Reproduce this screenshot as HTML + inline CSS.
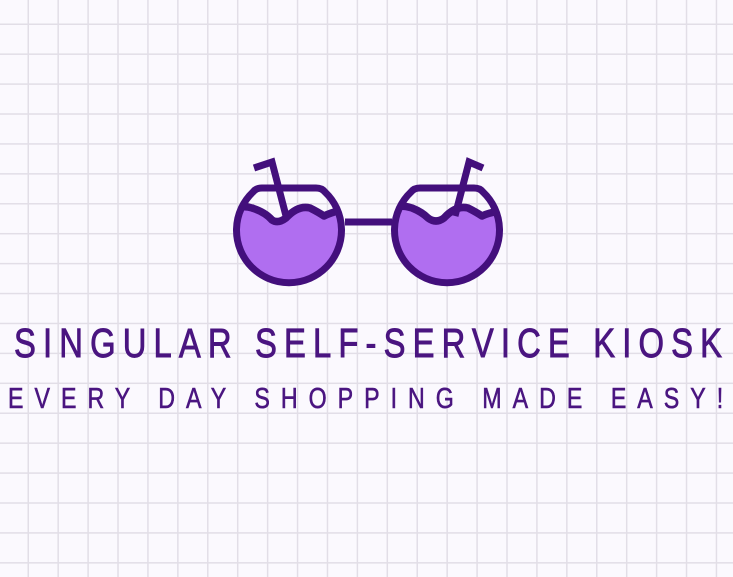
<!DOCTYPE html>
<html><head><meta charset="utf-8"><style>
html,body{margin:0;padding:0}
body{width:733px;height:577px;overflow:hidden;background-color:#fbf9fe;
background-image:linear-gradient(to right,#e2dee7 1.5px,transparent 1.5px),linear-gradient(to bottom,#e2dee7 1.5px,transparent 1.5px);
background-size:29.93px 29.93px;background-position:27.5px 23.5px}
svg{position:absolute;left:0;top:0}
</style></head><body>
<svg width="733" height="577" viewBox="0 0 733 577">
<defs>
<clipPath id="cl"><circle cx="289" cy="231" r="52"/></clipPath>
<clipPath id="cr"><circle cx="447" cy="231" r="52"/></clipPath>
</defs>
<g fill="none" stroke="#430f7c" stroke-width="7" stroke-linejoin="round" stroke-linecap="round">
<g clip-path="url(#cl)">
<path d="M230,212 Q240,204 252,208 Q265,212 272,220 Q278,224 286,218 Q298,205 310,208 Q318,212 324,216 Q332,212 350,208 L350,300 L230,300 Z" fill="#b06ef0" stroke="none"/>
<path d="M230,212 Q240,204 252,208 Q265,212 272,220 Q278,224 286,218 Q298,205 310,208 Q318,212 324,216 Q332,212 350,208" stroke-width="7.5"/>
</g>
<g clip-path="url(#cr)">
<path d="M388,208 Q400,204 412,208 Q422,212 428,218 Q436,224 444,218 Q456,205 468,208 Q476,212 482,216 Q490,212 508,210 L508,300 L388,300 Z" fill="#b06ef0" stroke="none"/>
<path d="M388,208 Q400,204 412,208 Q422,212 428,218 Q436,224 444,218 Q456,205 468,208 Q476,212 482,216 Q490,212 508,210" stroke-width="7.5"/>
</g>
<path d="M262,188 L316,188 Q322,188 325,192 A52.5 52.5 0 1 1 253,192 Q256,188 262,188 Z"/>
<path d="M420,188 L474,188 Q480,188 483,192 A52.5 52.5 0 1 1 411,192 Q414,188 420,188 Z"/>
<path d="M345,222 L392,222" stroke-linecap="butt"/>
<path d="M286,216 L272,162 L254,168" stroke-linejoin="miter" stroke-linecap="butt"/>
<path d="M455,216 L469,162 L483,168" stroke-linejoin="miter" stroke-linecap="butt"/>
</g>
<g fill="#4a1580" font-family="'Liberation Sans',sans-serif">
<text transform="translate(14,357) scale(0.8,1)" x="0" y="0" font-size="41" textLength="885" lengthAdjust="spacing" stroke="#4a1580" stroke-width="0.9">SINGULAR SELF-SERVICE KIOSK</text>
<text transform="translate(8,408) scale(0.8,1)" x="0" y="0" font-size="29" textLength="894" lengthAdjust="spacing" stroke="#4a1580" stroke-width="0.6">EVERY DAY SHOPPING MADE EASY!</text>
</g>
</svg>
</body></html>
